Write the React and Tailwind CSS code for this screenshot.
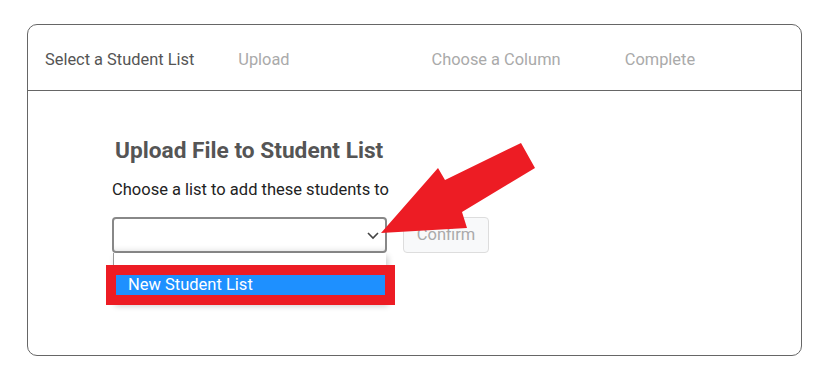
import React from "react";

export default function App() {
  const steps = [
    { label: "Select a Student List", active: true },
    { label: "Upload" },
    { label: "Choose a Column" },
    { label: "Complete" },
  ];
  return (
    <div
      className="relative w-[820px] h-[372px] bg-white pt-[24px] pl-[27px]"
      style={{ fontFamily: "Roboto, 'Liberation Sans', sans-serif" }}
    >
      <div className="w-[775px] h-[332px] border border-[#666] rounded-[10px]">
        <div className="grid grid-cols-4 h-[66px] border-b border-[#666] items-center pt-[4px]">
          {steps.map((s) => (
            <div
              key={s.label}
              className={`pl-[17px] text-[16.4px] leading-[20px] ${
                s.active ? "text-[#555]" : "text-[#aaa]"
              }`}
            >
              {s.label}
            </div>
          ))}
        </div>
        <div className="pl-[84px] pt-[46px]">
          <h2 className="pl-[3px] text-[22.7px] leading-[28px] font-bold text-[#555]">
            Upload File to Student List
          </h2>
          <p className="mt-[15px] text-[16.5px] leading-[20px] text-[#222]">
            Choose a list to add these students to
          </p>
          <div className="mt-[17px] flex items-start gap-[16px]">
            <div className="relative">
              <div className="w-[275px] h-[36px] border-2 border-[#888] rounded-[4px] bg-white shadow-[inset_0_-6px_6px_-6px_rgba(0,0,0,0.15)] flex items-center justify-end pr-[5px]">
                <svg width="14" height="10" viewBox="0 0 14 10">
                  <path d="M2 3 L7 8 L12 3" fill="none" stroke="#444" strokeWidth="1.6" />
                </svg>
              </div>
              <div className="absolute left-[1px] top-[36px] w-[273px] h-[50px] bg-white border-l border-[#999] shadow-[2px_3px_6px_rgba(0,0,0,0.2)]">
                <div className="mt-[22px] ml-[2px] mr-[1px] h-[20px] bg-[#1e90ff] text-white text-[16.5px] leading-[20px] pl-[12px]">
                  New Student List
                </div>
              </div>
            </div>
            <button className="w-[86px] h-[36px] border border-[#ddd] rounded-[4px] bg-[#f8f9fa] text-[#aaa] text-[16.5px]">
              Confirm
            </button>
          </div>
        </div>
      </div>
      <div className="absolute left-[106px] top-[265px] w-[289px] h-[40px] border-[10px] border-[#ed1c24]"></div>
      <svg className="absolute left-0 top-0" width="820" height="372" viewBox="0 0 820 372">
        <polygon
          points="381,233 438,168 445,180 521,143 535,168 462,212 467,228"
          fill="#ed1c24"
        />
      </svg>
    </div>
  );
}
